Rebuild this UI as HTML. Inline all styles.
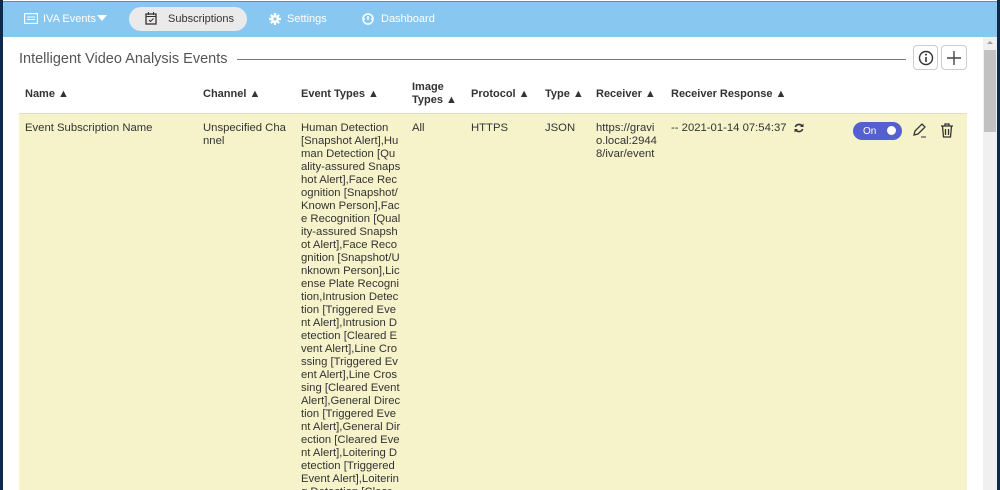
<!DOCTYPE html>
<html><head><style>
*{margin:0;padding:0;box-sizing:border-box}
html,body{width:1000px;height:490px;overflow:hidden}
body{background:#fff;font-family:"Liberation Sans",sans-serif;position:relative}
.a{position:absolute}
#nav{left:3px;top:1px;width:994px;height:36px;background:#88c7f0;border-top:1px solid #6a7fd0}
.nv{font-size:11px;color:#fff;top:13px}
.h{font-size:11px;font-weight:bold;color:#333;line-height:13px}
.c{font-size:11.3px;color:#333;line-height:13px}
</style></head><body>
<div class="a" style="left:0;top:0;width:3px;height:490px;background:#0d2a4a"></div>
<div class="a" style="left:997px;top:0;width:3px;height:490px;background:#0d2a4a"></div>
<div id="nav" class="a"></div>
<svg class="a" style="left:24px;top:13px" width="14" height="11"><rect x="0.5" y="0.5" width="13" height="10" fill="none" stroke="#fff" stroke-width="1.3"/><path d="M3 4h8M3 6.5h8" stroke="#fff"/></svg>
<div class="a nv" style="left:43px">IVA Events</div>
<svg class="a" style="left:97px;top:15px" width="10" height="6"><path d="M0 0h10L5 6z" fill="#fff"/></svg>
<div class="a" style="left:129px;top:7px;width:118px;height:24px;border-radius:12px;background:#eaeaea"></div>
<svg class="a" style="left:145px;top:12px" width="12" height="13"><rect x="1" y="2" width="10" height="10" fill="none" stroke="#333" stroke-width="1.3"/><path d="M3.5 0v3M8.5 0v3M1 4.5h10M4 8l1.5 1.5L8.5 6.5" stroke="#333" fill="none"/></svg>
<div class="a nv" style="left:168px;color:#333">Subscriptions</div>
<svg class="a" style="left:269px;top:13px" width="12" height="12"><circle cx="6" cy="6" r="4" fill="#fff"/><path d="M6 0v12M0 6h12M1.8 1.8l8.4 8.4M10.2 1.8l-8.4 8.4" stroke="#fff" stroke-width="2.2"/><circle cx="6" cy="6" r="1.6" fill="#88c7f0"/></svg>
<div class="a nv" style="left:287px">Settings</div>
<svg class="a" style="left:362px;top:13px" width="12" height="12"><circle cx="6" cy="6" r="5" fill="none" stroke="#fff" stroke-width="1.5"/><path d="M6 7V3M2 6h1M9 6h1" stroke="#fff" stroke-width="1.5"/></svg>
<div class="a nv" style="left:381px">Dashboard</div>

<div class="a" style="left:19px;top:51px;font-size:14.5px;color:#555">Intelligent Video Analysis Events</div>
<div class="a" style="left:237px;top:59px;width:669px;height:1px;background:#777"></div>
<div class="a" style="left:913px;top:45px;width:25px;height:25px;border:1px solid #ccc;border-radius:4px"></div>
<svg class="a" style="left:918px;top:50px" width="16" height="16"><circle cx="8" cy="8" r="6.5" fill="none" stroke="#333" stroke-width="1.4"/><path d="M8 7v5" stroke="#333" stroke-width="1.6"/><circle cx="8" cy="4.6" r="1" fill="#333"/></svg>
<div class="a" style="left:941px;top:45px;width:26px;height:25px;border:1px solid #ccc;border-radius:4px"></div>
<svg class="a" style="left:946px;top:50px" width="16" height="16"><path d="M8 1v14M1 8h14" stroke="#444" stroke-width="1.4"/></svg>

<div class="a h" style="left:25px;top:88px">Name ▲</div>
<div class="a h" style="left:203px;top:88px">Channel ▲</div>
<div class="a h" style="left:301px;top:88px">Event Types ▲</div>
<div class="a h" style="left:412px;top:81px">Image<br>Types ▲</div>
<div class="a h" style="left:471px;top:88px">Protocol ▲</div>
<div class="a h" style="left:545px;top:88px">Type ▲</div>
<div class="a h" style="left:596px;top:88px">Receiver ▲</div>
<div class="a h" style="left:671px;top:88px">Receiver Response ▲</div>

<div class="a" style="left:19px;top:113px;width:948px;height:377px;background:#f6f3cb;border-top:1px solid #e2dfc0"></div>
<div class="a c" style="left:25px;top:122px">Event Subscription Name</div>
<div class="a c" style="left:203px;top:122px">Unspecified Cha<br>nnel</div>
<div class="a c" style="left:301px;top:122px">Human Detection<br>[Snapshot Alert],Hu<br>man Detection [Qu<br>ality-assured Snaps<br>hot Alert],Face Rec<br>ognition [Snapshot/<br>Known Person],Fac<br>e Recognition [Qual<br>ity-assured Snapsh<br>ot Alert],Face Reco<br>gnition [Snapshot/U<br>nknown Person],Lic<br>ense Plate Recogni<br>tion,Intrusion Detec<br>tion [Triggered Eve<br>nt Alert],Intrusion D<br>etection [Cleared E<br>vent Alert],Line Cro<br>ssing [Triggered Ev<br>ent Alert],Line Cros<br>sing [Cleared Event<br>Alert],General Direc<br>tion [Triggered Eve<br>nt Alert],General Dir<br>ection [Cleared Eve<br>nt Alert],Loitering D<br>etection [Triggered<br>Event Alert],Loiterin<br>g Detection [Clear...</div>
<div class="a c" style="left:412px;top:122px">All</div>
<div class="a c" style="left:471px;top:122px">HTTPS</div>
<div class="a c" style="left:545px;top:122px">JSON</div>
<div class="a c" style="left:596px;top:122px">https://gravi<br>o.local:2944<br>8/ivar/event</div>
<div class="a c" style="left:671px;top:122px">-- 2021-01-14 07:54:37</div>
<svg class="a" style="left:794px;top:123px" width="10" height="10"><path d="M8.5 3.5A4 4 0 0 0 1.3 4M1.5 6.5A4 4 0 0 0 8.7 6" fill="none" stroke="#333" stroke-width="1.6"/><path d="M9.5 0.5v3.5H6zM0.5 9.5V6H4z" fill="#333"/></svg>
<div class="a" style="left:853px;top:122px;width:49px;height:18px;border-radius:9px;background:#5460d0"></div>
<div class="a" style="left:863px;top:126px;font-size:10px;color:#fff">On</div>
<div class="a" style="left:887px;top:126px;width:9px;height:9px;border-radius:50%;background:#fff"></div>
<svg class="a" style="left:912px;top:122px" width="16" height="16"><path d="M2 13l1-4 7-7 3 3-7 7z" fill="none" stroke="#333" stroke-width="1.3"/><path d="M9 15h5" stroke="#333"/></svg>
<svg class="a" style="left:940px;top:123px" width="14" height="15"><path d="M1 3h12M5 3V1h4v2M2.5 3l1 11h7l1-11M5.5 6v6M8.5 6v6" fill="none" stroke="#333" stroke-width="1.3"/></svg>

<div class="a" style="left:983px;top:37px;width:14px;height:453px;background:#f0f0f0"></div>
<div class="a" style="left:984px;top:50px;width:12px;height:82px;background:#c1c1c1"></div>
<div class="a" style="left:987px;top:41px;width:0;height:0;border-left:3px solid transparent;border-right:3px solid transparent;border-bottom:3px solid #a0a0a0"></div>
</body></html>
